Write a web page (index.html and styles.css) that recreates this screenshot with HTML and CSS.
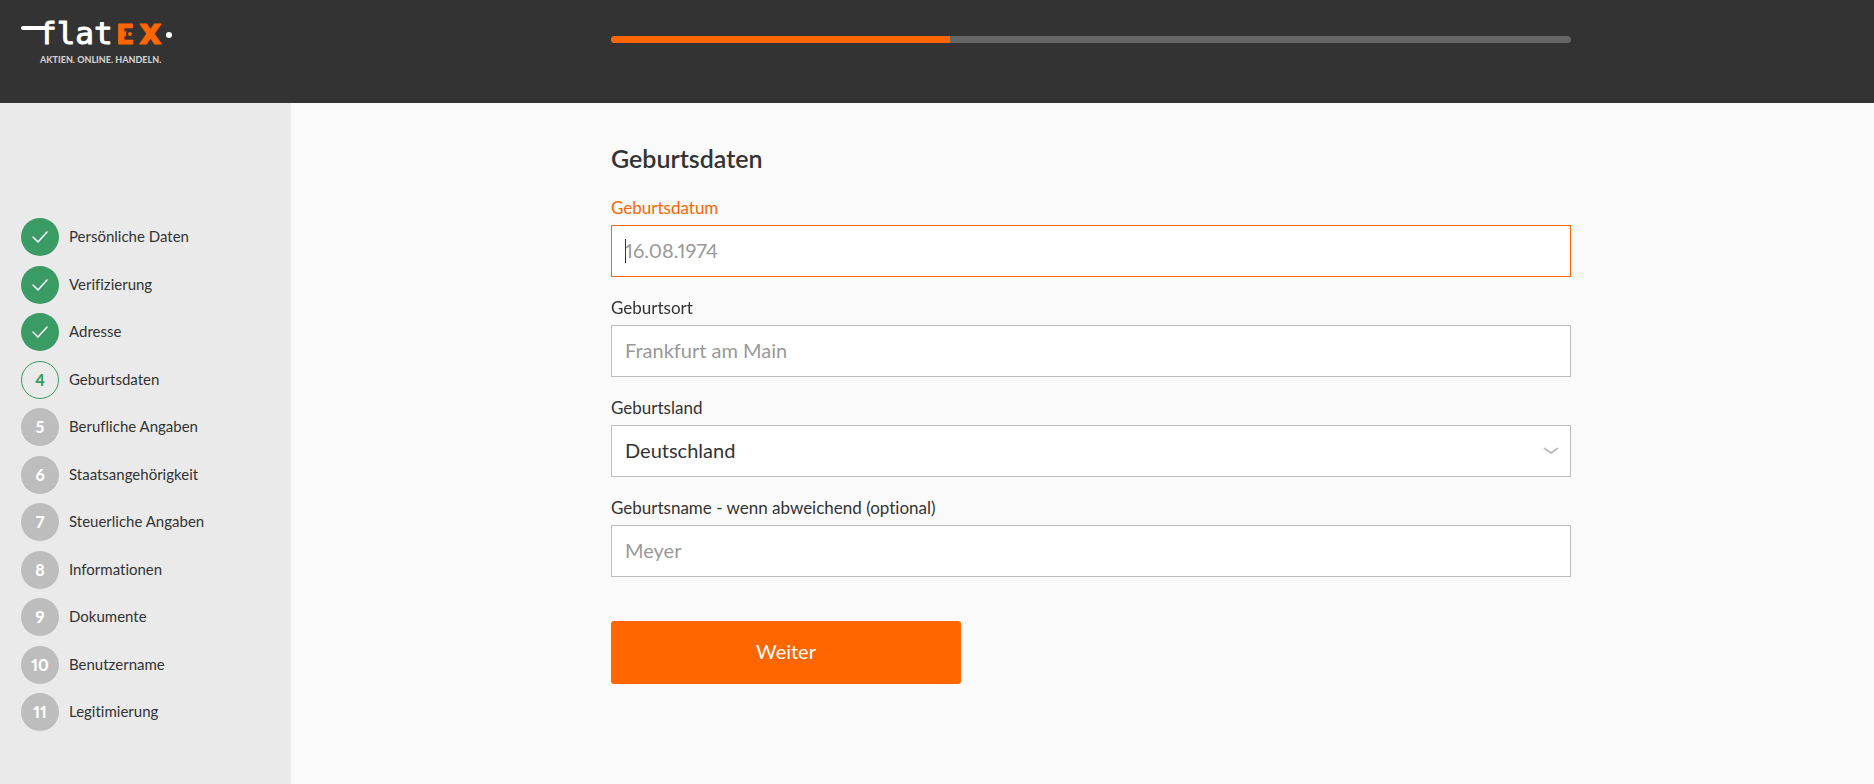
FILE: index.html
```html
<!DOCTYPE html>
<html lang="de">
<head>
<meta charset="utf-8">
<meta name="viewport" content="width=device-width, initial-scale=1">
<title>flatex – Geburtsdaten</title>
<link rel="stylesheet" href="styles.css">
</head>
<body>
<header class="header">
  <a class="brand" href="#" aria-label="flatex">
    <svg class="brand-logo" width="156" height="42" viewBox="0 0 156 42" aria-hidden="true">
      <path d="M3 15H26" fill="none" stroke="#fff" stroke-width="4" stroke-linecap="round"/>
      <text class="logo-flat" x="18" y="31">flat</text>
      <text class="logo-e" x="96" y="31">E</text>
      <text class="logo-x" x="119" y="31">x</text>
      <circle cx="110" cy="21" r="4" fill="#333"/>
      <circle cx="110" cy="21" r="2" fill="#f60"/>
      <circle cx="149" cy="22" r="3" fill="#fff"/>
    </svg>
    <span class="tagline">AKTIEN. ONLINE. HANDELN.</span>
  </a>
  <div class="columns">
    <div class="progress" role="progressbar" aria-label="Fortschritt" aria-valuenow="35" aria-valuemin="0" aria-valuemax="100"><div class="progress-fill"></div></div>
  </div>
</header>
<div class="page">
  <nav class="sidebar" aria-label="Schritte">
    <ol class="steps">
      <li class="step"><span class="badge badge-done"><svg class="check" viewBox="0 0 18 14"><path d="M2 7l5 5L16 2"/></svg></span><span class="step-name">Persönliche Daten</span></li>
      <li class="step"><span class="badge badge-done"><svg class="check" viewBox="0 0 18 14"><path d="M2 7l5 5L16 2"/></svg></span><span class="step-name">Verifizierung</span></li>
      <li class="step"><span class="badge badge-done"><svg class="check" viewBox="0 0 18 14"><path d="M2 7l5 5L16 2"/></svg></span><span class="step-name">Adresse</span></li>
      <li class="step" aria-current="step"><span class="badge badge-current">4</span><span class="step-name">Geburtsdaten</span></li>
      <li class="step"><span class="badge">5</span><span class="step-name">Berufliche Angaben</span></li>
      <li class="step"><span class="badge">6</span><span class="step-name">Staatsangehörigkeit</span></li>
      <li class="step"><span class="badge">7</span><span class="step-name">Steuerliche Angaben</span></li>
      <li class="step"><span class="badge">8</span><span class="step-name">Informationen</span></li>
      <li class="step"><span class="badge">9</span><span class="step-name">Dokumente</span></li>
      <li class="step"><span class="badge">10</span><span class="step-name">Benutzername</span></li>
      <li class="step"><span class="badge">11</span><span class="step-name">Legitimierung</span></li>
    </ol>
  </nav>
  <main class="columns">
    <form class="form">
      <h1 class="title">Geburtsdaten</h1>
      <div class="field field-active">
        <label class="label" for="birthdate">Geburtsdatum</label>
        <div class="overlay">
          <input class="control" id="birthdate" type="text" placeholder="16.08.1974" autofocus>
          <span class="caret" aria-hidden="true"></span>
        </div>
      </div>
      <div class="field">
        <label class="label" for="birthplace">Geburtsort</label>
        <input class="control" id="birthplace" type="text" placeholder="Frankfurt am Main">
      </div>
      <div class="field">
        <label class="label" for="country">Geburtsland</label>
        <div class="overlay">
          <select class="control" id="country"><option>Deutschland</option></select>
          <svg class="chevron" viewBox="0 0 16 8" aria-hidden="true"><path d="M1 1l7 5 7-5"/></svg>
        </div>
      </div>
      <div class="field">
        <label class="label" for="birthname">Geburtsname - wenn abweichend (optional)</label>
        <input class="control" id="birthname" type="text" placeholder="Meyer">
      </div>
      <button class="submit" type="submit">Weiter</button>
    </form>
  </main>
</div>
</body>
</html>
```
FILE: styles.css
```css
* { box-sizing: border-box; }

body {
  margin: 0;
  min-height: 100vh;
  display: flex;
  flex-direction: column;
  background: #fafafa;
  color: #333;
  font-family: Lato, "Liberation Sans", sans-serif;
  font-variant-ligatures: none;
  font-variant-numeric: proportional-nums;
}

.header,
.page {
  display: grid;
  grid-template-columns: 291px minmax(0, 1fr);
}

.header {
  background: #333;
  min-height: 103px;
}

.page { flex: 1; }

.columns {
  display: grid;
  grid-template-columns: minmax(24px, 320fr) minmax(0, 960px) minmax(24px, 303fr);
  align-items: start;
}

.columns > * { grid-column: 2; }

.brand {
  display: flex;
  flex-direction: column;
  align-items: flex-start;
  padding: 13px 20px;
  text-decoration: none;
}

.brand-logo { display: block; }

.logo-flat {
  font: 31px "DejaVu Sans Mono", monospace;
  fill: #fff;
  stroke: #fff;
  stroke-width: 1px;
  stroke-linejoin: round;
}

.logo-e,
.logo-x {
  font: bold 27px "DejaVu Sans", sans-serif;
  fill: #f60;
  stroke: #f60;
  stroke-width: 1px;
  stroke-linejoin: round;
}

.logo-x { font-size: 35px; }

.tagline {
  padding-left: 20px;
  color: #ccc;
  font-size: 9px;
  font-weight: 900;
  line-height: 10px;
}

.progress {
  height: 7px;
  margin-top: 36px;
  border-radius: 4px;
  background: #666;
  overflow: hidden;
}

.progress-fill {
  width: 35.3%;
  height: 100%;
  background: #f60;
}

.sidebar {
  background: #eaeaea;
  padding: 115px 21px 40px;
}

.steps {
  display: grid;
  grid-auto-rows: 48px 47px;
  margin: 0;
  padding: 0;
  list-style: none;
}

.step {
  display: flex;
  align-items: center;
  gap: 10px;
  height: 38px;
  font-size: 15px;
}

.step-name { padding-bottom: 2px; }

.badge {
  display: flex;
  flex: none;
  align-items: center;
  justify-content: center;
  width: 38px;
  height: 38px;
  padding-bottom: 1px;
  border-radius: 50%;
  background: #bdbdbd;
  color: #fff;
  font-size: 16px;
  font-weight: 900;
}

.badge-done { background: #3a9b64; }

.badge-current {
  border: 1px solid #3a9b64;
  background: none;
  color: #3a9b64;
}

.check {
  width: 18px;
  height: 14px;
  fill: none;
  stroke: #fff;
  stroke-width: 1.5;
  stroke-linecap: round;
  stroke-linejoin: round;
}

.form { padding: 39px 0; }

.title {
  margin: 0 0 22px;
  font-size: 25px;
  font-weight: 600;
  line-height: 32px;
}

.field { margin-bottom: 19px; }

.label {
  display: block;
  margin-bottom: 5px;
  font-size: 17px;
  line-height: 24px;
}

.control {
  display: block;
  width: 100%;
  height: 52px;
  padding: 0 13px 3px;
  border: 1px solid #bdbdbd;
  border-radius: 0;
  background: #fff;
  color: #333;
  font-family: inherit;
  font-size: 20px;
  font-variant: inherit;
  outline: none;
  appearance: none;
}

.control::placeholder { color: #999; opacity: 1; }

.field-active .label { color: #f60; }

.field-active .control {
  border-color: #f60;
  caret-color: transparent;
}

.overlay {
  display: grid;
  align-items: center;
}

.overlay > * { grid-area: 1 / 1; }

.caret {
  width: 1px;
  height: 24px;
  margin-left: 14px;
  background: #333;
  pointer-events: none;
}

.chevron {
  justify-self: end;
  width: 16px;
  height: 8px;
  margin-right: 12px;
  fill: none;
  stroke: #bdbdbd;
  stroke-width: 2;
  pointer-events: none;
}

.submit {
  display: block;
  width: 350px;
  max-width: 100%;
  height: 63px;
  margin-top: 44px;
  padding: 0 0 3px;
  border: 0;
  border-radius: 3px;
  background: #f60;
  color: #fff;
  font-family: inherit;
  font-size: 20px;
}
```
